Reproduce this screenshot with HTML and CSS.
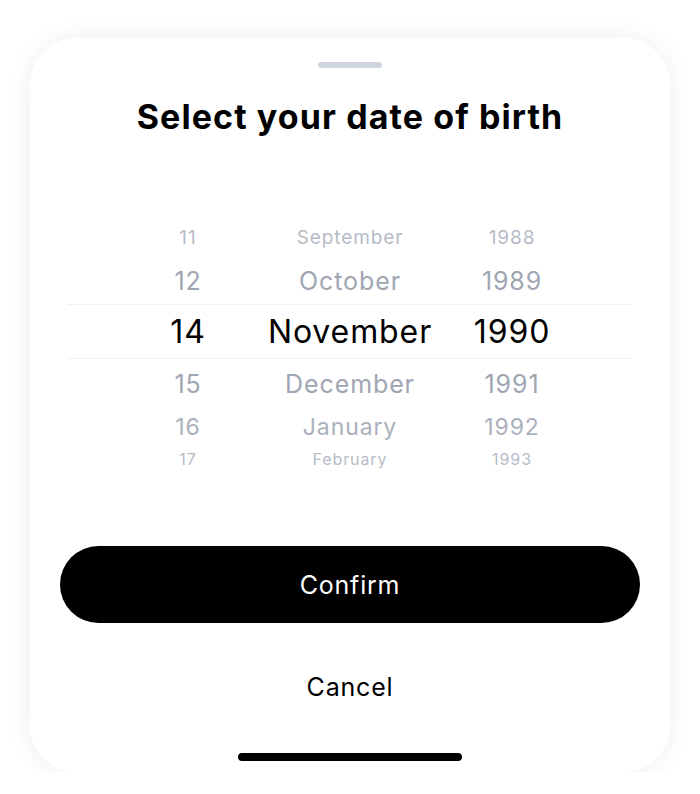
FILE: index.html
```html
<!DOCTYPE html>
<html>
<head>
    <title>Date of birth</title>
    <link rel="stylesheet" href="styles.css">
</head>
<body>
    <!-- Bottom sheet -->
    <div class="sheet">
        <div class="handle"></div>
        <h1 class="title">Select your date of birth</h1>

        <!-- Wheel picker -->
        <div class="picker">
            <div class="row far">
                <span class="day">11</span><span class="month">September</span><span class="year">1988</span>
            </div>
            <div class="row near">
                <span class="day">12</span><span class="month">October</span><span class="year">1989</span>
            </div>
            <div class="row selected">
                <span class="day">14</span><span class="month">November</span><span class="year">1990</span>
            </div>
            <div class="row near below">
                <span class="day">15</span><span class="month">December</span><span class="year">1991</span>
            </div>
            <div class="row mid">
                <span class="day">16</span><span class="month">January</span><span class="year">1992</span>
            </div>
            <div class="row farthest">
                <span class="day">17</span><span class="month">February</span><span class="year">1993</span>
            </div>
        </div>

        <button class="confirm-button">Confirm</button>
        <button class="cancel-button">Cancel</button>
        <div class="home-indicator"></div>
    </div>
</body>
</html>
```
FILE: styles.css
```css
body {
    background-color: #ffffff;
    font-family: Inter, "Noto Sans", sans-serif;
    margin: 0;
    padding: 0;
}

/* Stijl voor het sheet */
.sheet {
    margin: 38px 30px 0;
    height: 734px;
    background-color: #ffffff;
    border-radius: 46px;
    box-shadow: 0 0 24px rgba(0, 0, 0, 0.07);
    display: flex;
    flex-direction: column;
    align-items: center;
    padding-top: 24px;
    box-sizing: border-box;
}

.handle {
    width: 64px;
    height: 6px;
    border-radius: 3px;
    background-color: #cfd5de;
}

.title {
    margin: 29px 0 0;
    font-size: 34px;
    line-height: 40px;
    font-weight: 700;
    color: #000000;
    letter-spacing: 1.1px;
}

/* Stijl voor de picker */
.picker {
    margin-top: 79px;
    width: 564px;
    display: flex;
    flex-direction: column;
}

.row {
    display: flex;
    justify-content: center;
    align-items: center;
    color: #9fa6b3;
    letter-spacing: 0.9px;
}

.row span {
    text-align: center;
    white-space: nowrap;
}

.day {
    width: 96px;
}

.month {
    width: 228px;
}

.year {
    width: 96px;
}

.far {
    height: 42px;
    font-size: 19px;
    color: #b6bcc7;
}

.near {
    height: 46px;
    font-size: 25px;
}

.below {
    height: 50px;
}

.mid {
    height: 36px;
    font-size: 23px;
    color: #aab0bc;
}

.farthest {
    height: 28px;
    font-size: 16px;
    color: #b6bcc7;
}

.selected {
    height: 55px;
    font-size: 32px;
    color: #000000;
    border-top: 1px solid #f0f1f3;
    border-bottom: 1px solid #f0f1f3;
    box-sizing: border-box;
}

/* Knoppen */
.confirm-button {
    margin-top: 73px;
    width: 580px;
    height: 77px;
    border: none;
    border-radius: 39px;
    background-color: #000000;
    color: #ffffff;
    font-family: inherit;
    font-size: 25px;
    letter-spacing: 0.8px;
    cursor: pointer;
}

.cancel-button {
    margin-top: 44px;
    height: 40px;
    border: none;
    background: none;
    color: #000000;
    font-family: inherit;
    font-size: 25px;
    letter-spacing: 0.8px;
    cursor: pointer;
}

.home-indicator {
    margin-top: 46px;
    width: 224px;
    height: 8px;
    border-radius: 4px;
    background-color: #000000;
}
```
